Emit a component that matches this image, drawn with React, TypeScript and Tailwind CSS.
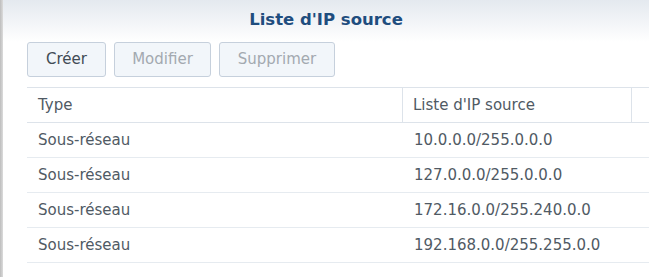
const rows = [
  { type: 'Sous-réseau', ip: '10.0.0.0/255.0.0.0' },
  { type: 'Sous-réseau', ip: '127.0.0.0/255.0.0.0' },
  { type: 'Sous-réseau', ip: '172.16.0.0/255.240.0.0' },
  { type: 'Sous-réseau', ip: '192.168.0.0/255.255.0.0' },
]

function Btn({ label, w, disabled }: { label: string; w: string; disabled?: boolean }) {
  return (
    <button
      className={
        'h-[35px] rounded-[3px] border border-[#c6d0dc] bg-[#f2f6fa] text-[15px] ' +
        w +
        (disabled ? ' text-[#a3a9b0]' : ' text-[#414b55]')
      }
    >
      {label}
    </button>
  )
}

export default function App() {
  return (
    <div className="flex h-[277px] w-[649px] overflow-hidden bg-white font-['DejaVu_Sans',sans-serif]">
      <div className="w-[3px] shrink-0 bg-gradient-to-r from-[#bdbdbd] to-[#dcdcdc]" />
      <div className="flex min-w-0 flex-1 flex-col">
        <div className="h-[42px] bg-gradient-to-b from-[#e4e9ef] to-white pt-[9px] text-center">
          <h1 className="text-[16.5px] leading-[22px] font-bold text-[#1f4d7e]">Liste d'IP source</h1>
        </div>
        <div className="flex gap-[8px] pl-[24px]">
          <Btn label="Créer" w="w-[79px]" />
          <Btn label="Modifier" w="w-[97px]" disabled />
          <Btn label="Supprimer" w="w-[116px]" disabled />
        </div>
        <div className="mt-[10px] ml-[24px] border-t border-[#dde3ea] text-[15px] text-[#505a64]">
          <div className="flex h-[35px] border-b border-[#dde3ea]">
            <div className="flex w-[376px] items-center border-r border-[#dde3ea] pl-[11px]">Type</div>
            <div className="flex w-[229px] items-center border-r border-[#dde3ea] pl-[10px]">Liste d'IP source</div>
            <div className="flex-1" />
          </div>
          {rows.map((r, i) => (
            <div key={i} className="flex h-[35px] border-b border-[#e6ebf0]">
              <div className="flex w-[376px] items-center pl-[11px]">{r.type}</div>
              <div className="flex items-center pl-[11px]">{r.ip}</div>
            </div>
          ))}
        </div>
      </div>
    </div>
  )
}
